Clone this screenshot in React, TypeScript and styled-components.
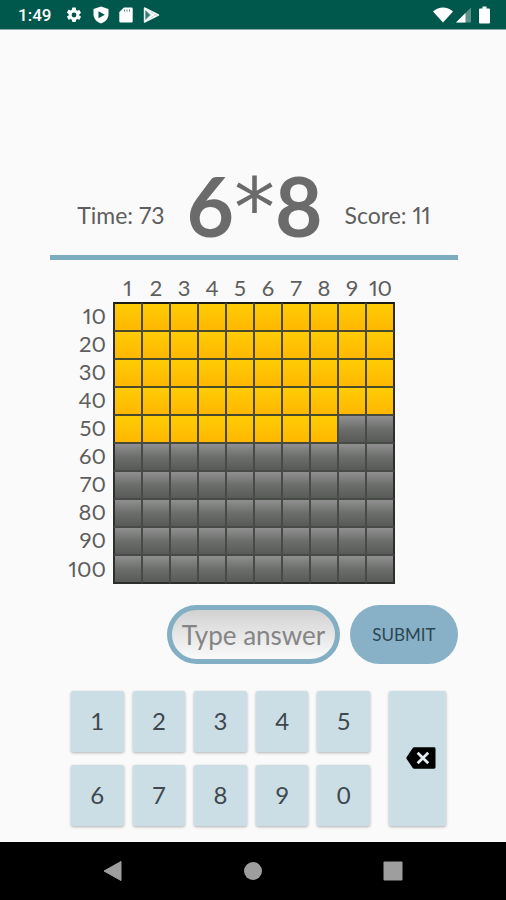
import React, { useState } from 'react';
import styled, { createGlobalStyle } from 'styled-components';

const GlobalStyle = createGlobalStyle`
  *, *::before, *::after { box-sizing: border-box; }
  body {
    margin: 0;
    background: #fafafa;
    font-family: Lato, "Open Sans", sans-serif;
    color: #5e5e5e;
  }
  button, input { font: inherit; }
`;

const Page = styled.div`
  min-height: 100vh;
  display: flex;
  flex-direction: column;
`;

const StatusBar = styled.header`
  height: 30px;
  flex: none;
  display: flex;
  align-items: center;
  justify-content: space-between;
  padding: 0 16px 0 18px;
  background: #00574b;
  border-bottom: 1px solid #8fa9a4;
  color: #ffffff;
`;

const StatusGroup = styled.div<{ $gap: number }>`
  display: flex;
  align-items: center;
  gap: ${(p) => p.$gap}px;

  svg { display: block; }
`;

const Clock = styled.span`
  font: 500 17px/20px Roboto, sans-serif;
  margin-right: 4px;
`;

const BatterySlot = styled.span`
  padding-left: 4px;
`;

const Main = styled.main`
  flex: 1;
  width: 100%;
  max-width: 600px;
  margin: 0 auto;
  padding: 130px 48px 14px 50px;
  display: flex;
  flex-direction: column;
`;

const Scoreboard = styled.section`
  display: flex;
  align-items: flex-end;
  justify-content: center;
  gap: 22px;
  height: 100px;
  padding-bottom: 9px;
  border-bottom: 5px solid #7bacc0;
`;

const Stat = styled.p`
  margin: 0 0 17px;
  font-size: 23px;
  line-height: 28px;
  font-variant-numeric: proportional-nums;
  white-space: nowrap;
`;

const Problem = styled.h1`
  display: flex;
  align-items: baseline;
  margin: 0;
  font-size: 82px;
  line-height: 82px;
  font-weight: 700;
  color: #6b6b6b;
`;

const Operator = styled.span`
  font-family: "DejaVu Sans", sans-serif;
  font-weight: 400;
  line-height: 72px;
`;

const Board = styled.table`
  align-self: center;
  margin: 17px 63px 0 0;
  border-spacing: 0;
  table-layout: fixed;
  font-size: 22px;
  line-height: 24px;
  font-variant-numeric: proportional-nums;
`;

const ColumnLabel = styled.th`
  width: 28px;
  height: 25px;
  padding: 0 0 3px;
  line-height: 22px;
  font-weight: 400;

  &:nth-child(2), &:last-child { width: 29px; }
`;

const RowLabel = styled.th`
  width: 63px;
  padding: 0 7px 2px 0;
  font-weight: 400;
  text-align: right;
`;

const Cell = styled.td<{ $filled: boolean }>`
  height: 28px;
  padding: 0;
  border: 1px solid ${(p) => (p.$filled ? '#4a4a2c' : '#484a48')};
  background: ${(p) =>
    p.$filled
      ? 'linear-gradient(#ffcc05, #ffb700)'
      : 'linear-gradient(#8f908f, #6c6e6c 50%, #585a58)'};

  th + & { border-left: 2px solid #2e2e2e; }
  &:last-child { border-right: 2px solid #2e2e2e; }
  tr:first-child > & { height: 29px; border-top: 2px solid #1c1c14; }
  tr:last-child > & { height: 29px; border-bottom: 2px solid #2e2e2e; }
`;

const AnswerForm = styled.form`
  display: flex;
  justify-content: flex-end;
  gap: 10px;
  margin-top: 21px;
`;

const AnswerInput = styled.input`
  width: 173px;
  height: 59px;
  padding: 0 4px;
  border: 5px solid #82afc4;
  border-radius: 30px;
  background: linear-gradient(#d2d2d2, #fafafa);
  color: #555555;
  font-size: 26px;
  text-align: center;
  outline: none;

  &::placeholder { color: #858585; opacity: 1; }
`;

const SubmitButton = styled.button`
  width: 108px;
  height: 59px;
  padding: 0;
  border: 0;
  border-radius: 30px;
  background: #88b1c7;
  color: #2d4552;
  font-size: 17px;
`;

const Keypad = styled.section`
  display: flex;
  gap: 19px;
  margin-top: 27px;
  padding: 0 12px 0 21px;
`;

const Digits = styled.div`
  flex: 1;
  display: grid;
  grid-template-columns: repeat(5, 1fr);
  gap: 13px 9px;
`;

const Key = styled.button`
  height: 61px;
  padding: 0 0 2px;
  border: 0;
  border-radius: 2px;
  background: #cbdee6;
  box-shadow: 0 1px 3px rgba(0, 0, 0, 0.3);
  color: #3e484e;
  font-size: 24px;
`;

const EraseKey = styled(Key)`
  width: 57px;
  height: auto;
  padding-right: 10px;
  display: flex;
  align-items: center;
  justify-content: flex-end;
`;

const NavBar = styled.nav`
  height: 58px;
  flex: none;
  display: flex;
  align-items: center;
  justify-content: center;
  gap: 116px;
  background: #000000;
`;

const NavButton = styled.button`
  display: block;
  width: 24px;
  height: 24px;
  padding: 0;
  border: 0;
  background: none;

  svg { display: block; }
`;

const GearIcon = () => (
  <svg width="18" height="18" viewBox="0 0 24 24" fill="#fff" aria-hidden="true">
    <path d="M19.14 12.94c.04-.3.06-.61.06-.94s-.02-.64-.07-.94l2.03-1.58a.49.49 0 0 0 .12-.61l-1.92-3.32a.49.49 0 0 0-.59-.22l-2.39.96a7 7 0 0 0-1.62-.94l-.36-2.54A.48.48 0 0 0 13.92 2h-3.84a.48.48 0 0 0-.48.41l-.36 2.54c-.59.24-1.13.57-1.62.94l-2.39-.96a.48.48 0 0 0-.59.22L2.72 8.47a.48.48 0 0 0 .12.61l2.03 1.58a7 7 0 0 0 0 1.88l-2.03 1.58a.49.49 0 0 0-.12.61l1.92 3.32c.12.22.37.29.59.22l2.39-.96c.5.38 1.03.7 1.62.94l.36 2.54c.05.24.24.41.48.41h3.84c.24 0 .44-.17.47-.41l.36-2.54a7 7 0 0 0 1.62-.94l2.39.96c.22.08.47 0 .59-.22l1.92-3.32a.48.48 0 0 0-.12-.61zM12 15.2a3.2 3.2 0 1 1 0-6.4 3.2 3.2 0 0 1 0 6.4z" />
  </svg>
);

const ShieldIcon = () => (
  <svg width="16" height="18" viewBox="0 0 16 18" aria-hidden="true">
    <path d="M8 .5 15.5 3v5c0 4.5-3 8-7.5 9.5C3.5 16 .5 12.5.5 8V3z" fill="#fff" />
    <path d="M5.5 5.2v7L11.8 8.7z" fill="#00574b" />
  </svg>
);

const CardIcon = () => (
  <svg width="14" height="16" viewBox="0 0 14 16" aria-hidden="true">
    <path d="M5 .5h7.5a1.2 1.2 0 0 1 1.2 1.2v12.6a1.2 1.2 0 0 1-1.2 1.2h-11a1.2 1.2 0 0 1-1.2-1.2V5z" fill="#fff" />
    <path d="M5.5 2.5v2M8 2.5v2M10.5 2.5v2" stroke="#4d8a82" />
  </svg>
);

const PlayIcon = () => (
  <svg width="17" height="16" viewBox="0 0 17 16" aria-hidden="true">
    <path d="M1.5 1v14L15.5 8z" fill="#b5d0cc" stroke="#e8f1ef" strokeWidth="1.4" strokeLinejoin="round" />
    <path d="M2.5 3.5 7 8l-4.5 4.5z" fill="#3a7c73" />
    <path d="M2 1.5 12 10M2 14.5 12 6" stroke="#fff" strokeWidth="1.5" />
  </svg>
);

const WifiIcon = () => (
  <svg width="20" height="16" viewBox="0 0 20 16" aria-hidden="true">
    <path d="M0 4.5C6-.8 14-.8 20 4.5L10 15.5z" fill="#fff" />
  </svg>
);

const SignalIcon = () => (
  <svg width="16" height="16" viewBox="0 0 16 16" aria-hidden="true">
    <path d="M0 15.5 15 .5v15z" fill="#5a9188" />
    <path d="M0 15.5 9.5 6v9.5z" fill="#fff" />
  </svg>
);

const BatteryIcon = () => (
  <svg width="11" height="18" viewBox="0 0 11 18" aria-hidden="true">
    <path d="M3.5.5h4v2H10a1 1 0 0 1 1 1v13a1 1 0 0 1-1 1H1a1 1 0 0 1-1-1v-13a1 1 0 0 1 1-1h2.5z" fill="#fff" />
  </svg>
);

const EraseIcon = () => (
  <svg width="30" height="22" viewBox="0 0 31 22" aria-hidden="true">
    <path d="M8.5 0H29a1.5 1.5 0 0 1 1.5 1.5v19A1.5 1.5 0 0 1 29 22H8.5a2 2 0 0 1-1.7-.9L.7 12a1.8 1.8 0 0 1 0-2L6.8.9A2 2 0 0 1 8.5 0z" fill="#000" />
    <path d="m12 5.500 11 11m0-11-11 11" stroke="#e4eff3" strokeWidth="2.8" />
  </svg>
);

const range = Array.from({ length: 10 }, (_, i) => i + 1);
const keys = ['1', '2', '3', '4', '5', '6', '7', '8', '9', '0'];
const PRODUCT = 48;

export default function App() {
  const [answer, setAnswer] = useState('');

  return (
    <Page>
      <GlobalStyle />
      <StatusBar>
        <StatusGroup $gap={10}>
          <Clock>1:49</Clock>
          <GearIcon />
          <ShieldIcon />
          <CardIcon />
          <PlayIcon />
        </StatusGroup>
        <StatusGroup $gap={3}>
          <WifiIcon />
          <SignalIcon />
          <BatterySlot>
            <BatteryIcon />
          </BatterySlot>
        </StatusGroup>
      </StatusBar>

      <Main>
        <Scoreboard>
          <Stat>Time: 73</Stat>
          <Problem>
            6<Operator>*</Operator>8
          </Problem>
          <Stat>Score: 11</Stat>
        </Scoreboard>

        <Board>
          <thead>
            <tr>
              <RowLabel as="td" />
              {range.map((n) => (
                <ColumnLabel key={n} scope="col">{n}</ColumnLabel>
              ))}
            </tr>
          </thead>
          <tbody>
            {range.map((row) => (
              <tr key={row}>
                <RowLabel scope="row">{row * 10}</RowLabel>
                {range.map((col) => (
                  <Cell key={col} $filled={(row - 1) * 10 + col <= PRODUCT} />
                ))}
              </tr>
            ))}
          </tbody>
        </Board>

        <AnswerForm onSubmit={(e) => e.preventDefault()}>
          <AnswerInput
            aria-label="Type answer"
            placeholder="Type answer"
            inputMode="numeric"
            value={answer}
            onChange={(e) => setAnswer(e.target.value)}
          />
          <SubmitButton type="submit">SUBMIT</SubmitButton>
        </AnswerForm>

        <Keypad>
          <Digits>
            {keys.map((k) => (
              <Key key={k} type="button" onClick={() => setAnswer(answer + k)}>{k}</Key>
            ))}
          </Digits>
          <EraseKey type="button" aria-label="Delete" onClick={() => setAnswer(answer.slice(0, -1))}>
            <EraseIcon />
          </EraseKey>
        </Keypad>
      </Main>

      <NavBar>
        <NavButton type="button" aria-label="Back">
          <svg width="24" height="24" viewBox="0 0 24 24" aria-hidden="true">
            <path d="M20 2.5v19L3 12z" fill="#9e9e9e" stroke="#9e9e9e" strokeLinejoin="round" />
          </svg>
        </NavButton>
        <NavButton type="button" aria-label="Home">
          <svg width="24" height="24" viewBox="0 0 24 24" aria-hidden="true">
            <circle cx="12" cy="12" r="9" fill="#9e9e9e" />
          </svg>
        </NavButton>
        <NavButton type="button" aria-label="Recent apps">
          <svg width="24" height="24" viewBox="0 0 24 24" aria-hidden="true">
            <rect x="2.5" y="2.5" width="19" height="19" rx="1" fill="#9e9e9e" />
          </svg>
        </NavButton>
      </NavBar>
    </Page>
  );
}
